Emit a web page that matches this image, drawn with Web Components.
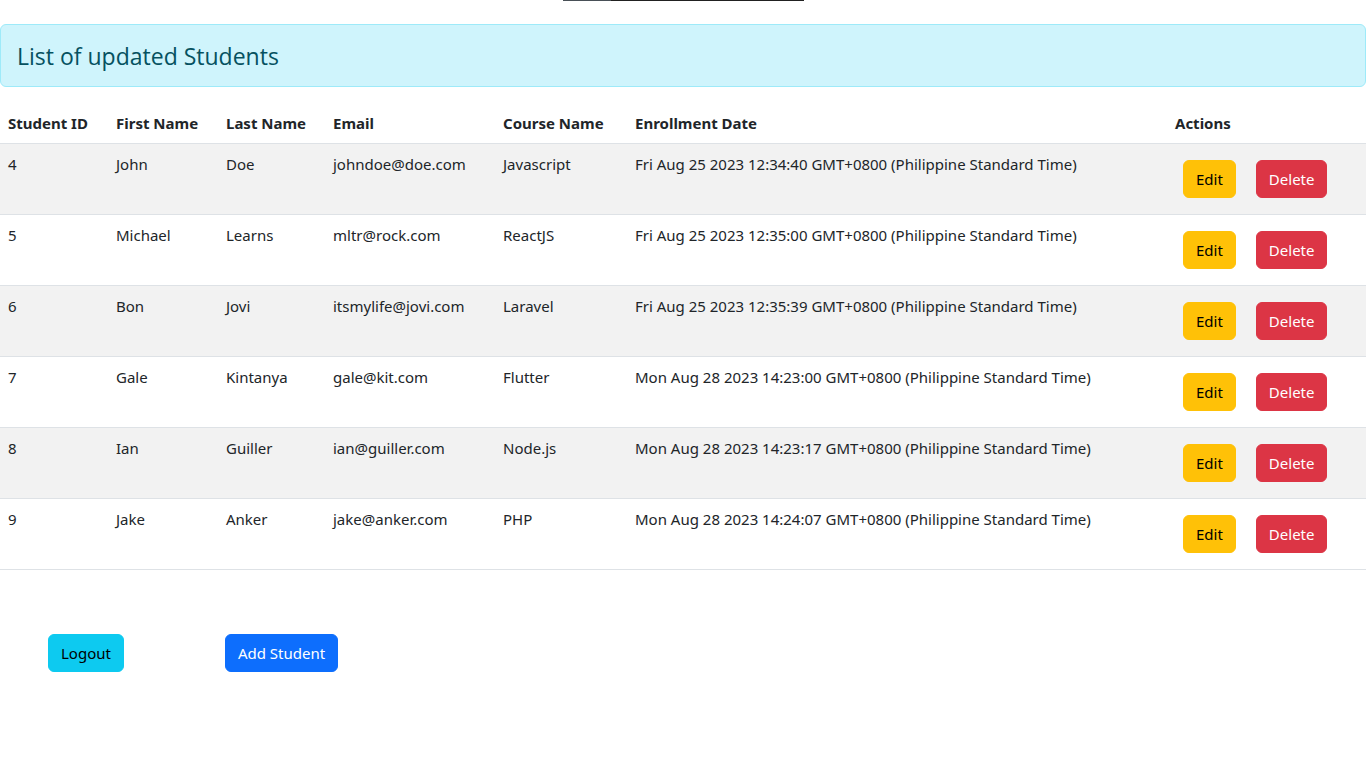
<!DOCTYPE html>
<html lang="en">
<head>
<meta charset="utf-8">
<meta name="viewport" content="width=device-width, initial-scale=1">
<title>Students</title>
<style>
  body { margin: 0; background: #fff; color: #212529; font: 15px/24px "Noto Sans", "Open Sans", sans-serif; }
</style>
</head>
<body>
<student-page>
  <window-strip slot="top"></window-strip>
  <alert-banner>List of updated Students</alert-banner>
  <student-table></student-table>
  <action-button slot="footer" variant="info">Logout</action-button>
  <action-button slot="footer" variant="primary">Add Student</action-button>
</student-page>

<script>
const define = (name, html, setup) => {
  const template = document.createElement('template');
  template.innerHTML = html;
  customElements.define(name, class extends HTMLElement {
    constructor() {
      super();
      this.attachShadow({ mode: 'open' }).append(template.content.cloneNode(true));
      if (setup) setup(this.shadowRoot);
    }
  });
};

define('student-page', `
  <style>
    :host { display: block; }
    header { height: 24px; }
    main { display: flex; flex-direction: column; gap: 16px; }
    footer { display: flex; gap: 101px; padding: 64px 48px; }
  </style>
  <header><slot name="top"></slot></header>
  <main><slot></slot></main>
  <footer><slot name="footer"></slot></footer>
`);

/* Thin two-tone bar on the top edge of the page */
define('window-strip', `
  <style>
    :host { display: flex; width: 241px; height: 1px; margin: 0 auto; background: #212121; }
    span { width: 48px; background: #495057; }
  </style>
  <span></span>
`);

define('alert-banner', `
  <style>
    :host { display: block; padding: 16px 16px 14px; color: #055160; background: #cff4fc; border: 1px solid #9eeaf9; border-radius: 6px; }
    h1 { margin: 0; font-family: "Open Sans", sans-serif; font-size: 23px; line-height: 31px; font-weight: 400; }
  </style>
  <h1><slot></slot></h1>
`);

define('action-button', `
  <style>
    :host { display: inline-block; }
    button { display: block; box-sizing: border-box; width: 100%; height: 38px; padding: 6px 12px; border: 1px solid transparent; border-radius: 6px; font: inherit; white-space: nowrap; cursor: pointer; color: #000; }
    :host([variant="warning"]) button { background: #ffc107; border-color: #ffc107; }
    :host([variant="danger"]) button { background: #dc3545; border-color: #dc3545; color: #fff; }
    :host([variant="info"]) button { background: #0dcaf0; border-color: #0dcaf0; }
    :host([variant="primary"]) button { background: #0d6efd; border-color: #0d6efd; color: #fff; }
  </style>
  <button type="button"><slot></slot></button>
`);

const students = [
  ['4', 'John', 'Doe', 'johndoe@doe.com', 'Javascript', 'Fri Aug 25 2023 12:34:40 GMT+0800 (Philippine Standard Time)'],
  ['5', 'Michael', 'Learns', 'mltr@rock.com', 'ReactJS', 'Fri Aug 25 2023 12:35:00 GMT+0800 (Philippine Standard Time)'],
  ['6', 'Bon', 'Jovi', 'itsmylife@jovi.com', 'Laravel', 'Fri Aug 25 2023 12:35:39 GMT+0800 (Philippine Standard Time)'],
  ['7', 'Gale', 'Kintanya', 'gale@kit.com', 'Flutter', 'Mon Aug 28 2023 14:23:00 GMT+0800 (Philippine Standard Time)'],
  ['8', 'Ian', 'Guiller', 'ian@guiller.com', 'Node.js', 'Mon Aug 28 2023 14:23:17 GMT+0800 (Philippine Standard Time)'],
  ['9', 'Jake', 'Anker', 'jake@anker.com', 'PHP', 'Mon Aug 28 2023 14:24:07 GMT+0800 (Philippine Standard Time)']
];

define('student-table', `
  <style>
    :host { display: block; }
    table { width: 100%; table-layout: fixed; border-spacing: 0; }
    .id { width: 108px; } .first { width: 110px; } .last { width: 107px; }
    .email { width: 170px; } .course { width: 132px; } .actions { width: 199px; }
    th, td { padding: 8px; text-align: left; vertical-align: top; border-bottom: 1px solid #dee2e6; }
    th { font-weight: 700; white-space: nowrap; }
    tbody tr:nth-child(odd) { background: #f2f2f2; }
    .buttons { display: flex; gap: 20px; padding: 8px; }
  </style>
  <table>
    <colgroup><col class="id"><col class="first"><col class="last"><col class="email"><col class="course"><col><col class="actions"></colgroup>
    <thead><tr>
      <th scope="col">Student ID</th><th scope="col">First Name</th><th scope="col">Last Name</th><th scope="col">Email</th>
      <th scope="col">Course Name</th><th scope="col">Enrollment Date</th><th scope="col">Actions</th>
    </tr></thead>
    <tbody></tbody>
  </table>
`, root => {
  root.querySelector('tbody').innerHTML = students.map(row => `<tr>${row.map(v => `<td>${v}</td>`).join('')}
    <td><div class="buttons"><action-button variant="warning">Edit</action-button><action-button variant="danger">Delete</action-button></div></td></tr>`).join('');
});
</script>
</body>
</html>
